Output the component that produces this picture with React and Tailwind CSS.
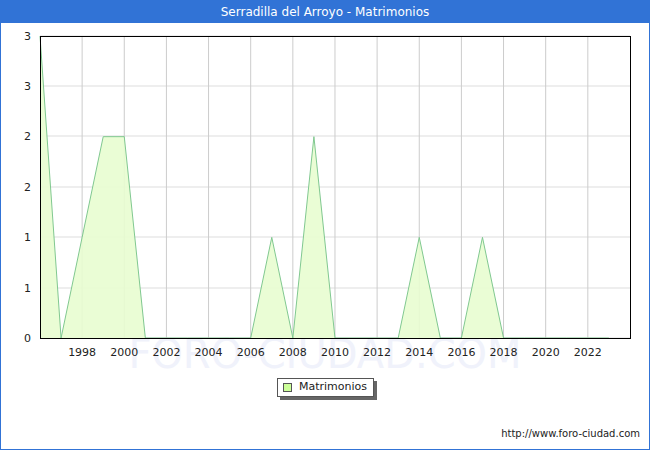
export default function App() {
  const data = [3,0,1,2,2,0,0,0,0,0,0,1,0,2,0,0,0,0,1,0,0,1,0,0,0,0,0,0];
  const X = (i) => 40 + i * 21.07;
  const Y = (v) => 337 - v * 100.67;
  const pts = data.map((v, i) => `${X(i)},${Y(v)}`).join(" ");
  const fill = `${X(0)},337 ${pts} ${X(data.length - 1)},337`;
  const years = [];
  for (let y = 1998; y <= 2022; y += 2) years.push(y);
  const ylab = [["3",35],["3",85],["2",135],["2",186],["1",236],["1",287],["0",337]];
  return (
    <div className="w-[650px] h-[450px] border border-[#3173d6] bg-white flex flex-col" style={{fontFamily:'"DejaVu Sans", sans-serif'}}>
      <div className="h-[22px] bg-[#3173d6] text-white text-[12px] flex items-center justify-center shrink-0">Serradilla del Arroyo - Matrimonios</div>
      <svg width="648" height="426" viewBox="1 22 648 426" className="block">
        <text x="325" y="367" textAnchor="middle" fontSize="40" fill="#f0f2fb" fontFamily="DejaVu Sans">FORO-CIUDAD.COM</text>
        {ylab.map(([t,y],i)=>(
          <g key={i}>
            <line x1="40" x2="630" y1={y} y2={y} stroke="#dddddd" />
            <text x="31" y={y+4} textAnchor="end" fontSize="11" fill="#222">{t}</text>
          </g>
        ))}
        {years.map((yr)=>{const x=X(yr-1996);return(
          <g key={yr}>
            <line x1={x} x2={x} y1="35" y2="337" stroke="#cccccc" />
            <text x={x} y="355" textAnchor="middle" fontSize="11" fill="#222">{yr}</text>
          </g>);})}
        <polygon points={fill} fill="#e8fdd0" fillOpacity="0.9" />
        <polyline points={pts} fill="none" stroke="#80c890" strokeWidth="1" />
        <rect x="40.5" y="35.5" width="590" height="302" fill="none" stroke="#000" />
      </svg>
      <div className="absolute left-[277px] top-[378px] w-[97px] h-[19px] bg-white border border-[#555] shadow-[3px_3px_0_#666] flex items-center gap-[7px] px-[5px] text-[11px] text-[#222]">
        <span className="w-[9px] h-[9px] bg-[#ccff99] border border-[#555]"></span>Matrimonios
      </div>
      <div className="absolute left-[500px] top-[426px] w-[140px] text-right text-[10px] text-[#222]">http://www.foro-ciudad.com</div>
    </div>
  );
}
